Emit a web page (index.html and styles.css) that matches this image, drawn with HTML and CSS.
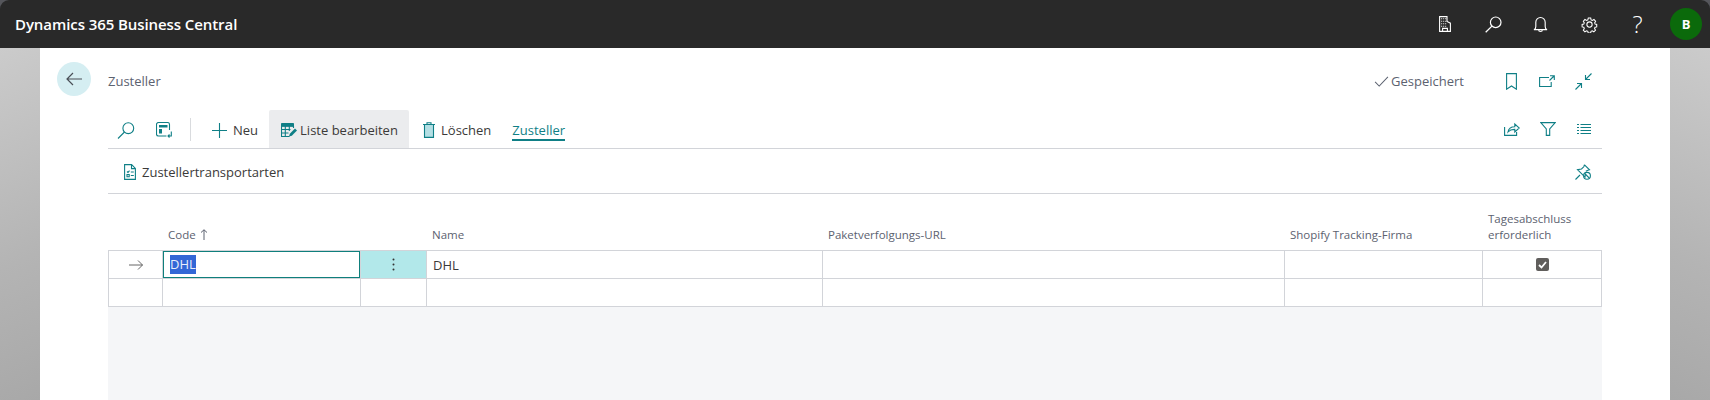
FILE: index.html
```html
<!DOCTYPE html>
<html lang="de">
<head>
<meta charset="utf-8">
<title>Zusteller</title>
<link rel="stylesheet" href="styles.css">
</head>
<body>
<div class="shell">
  <header class="topbar">
    <div class="brand">Dynamics 365 Business Central</div>
    <div class="top-icons">
      <svg class="ti ti-building" viewBox="0 0 12 16"><path d="M.6 15.400V.6h7.400v4.800l3.400 1.800v8.200zM3.600 15.400v-3h4.800v3" fill="none" stroke="#fff" stroke-width="1.100"/><path d="M2.200 2.200h1v1h-1zM4.200 2.200h1v1h-1zM6.200 2.200h1v1h-1zM2.200 4.700h1v1h-1zM4.200 4.700h1v1h-1zM6.200 4.700h1v1h-1zM2.200 7.200h1v1h-1zM4.200 7.200h1v1h-1zM6.200 7.200h1v1h-1zM2.200 9.700h1v1h-1zM4.200 9.700h1v1h-1zM6.200 9.700h1v1h-1z" fill="#fff"/></svg>
      <svg class="ti ti-search" viewBox="0 0 17 17"><circle cx="10.700" cy="6.300" r="5.300" fill="none" stroke="#fff" stroke-width="1.200"/><path d="M6.900 10.100.7 16.300" stroke="#fff" stroke-width="1.300" fill="none"/></svg>
      <svg class="ti ti-bell" viewBox="0 0 16 18"><path d="M1 14.500c1.500-.6 2-1.600 2-3.500V6.500a5 5 0 0 1 10 0V11c0 1.900.5 2.900 2 3.500zM6 14.500a2 2 0 0 0 4 0" fill="none" stroke="#fff" stroke-width="1.200"/></svg>
      <svg class="ti ti-gear" viewBox="0 0 18 18"><path d="M7.500 1h3l.5 2.300 1.500.7 2.100-1.200 2 2.100-1.200 2.100.6 1.500 2 .5v3l-2.100.5-.6 1.500 1.200 2-2.100 2.100-2-1.200-1.500.6-.5 2.200h-3l-.5-2.200-1.500-.6-2.100 1.200-2-2.100 1.200-2-.6-1.500-2.100-.5v-3l2.100-.5.6-1.500-1.200-2.100 2-2.100 2.100 1.200 1.500-.7z" transform="translate(1.350 1.350) scale(.85)" fill="none" stroke="#fff" stroke-width="1.300"/><circle cx="9" cy="9" r="2.800" fill="none" stroke="#fff" stroke-width="1.100"/></svg>
      <span class="ti-help">?</span>
      <span class="avatar">B</span>
    </div>
  </header>
  <div class="stage">
    <div class="gutter gutter-left"></div>
    <main class="page">
      <div class="back-col">
        <span class="back">
          <svg class="back-icon" viewBox="0 0 16 14"><path d="M7 1 1 7l6 6M1 7h15" fill="none" stroke="#4a4f57" stroke-width="1.200"/></svg>
        </span>
      </div>
      <div class="content">
        <div class="title-row">
          <h1 class="title">Zusteller</h1>
          <div class="saved">
            <svg class="check" viewBox="0 0 16 12"><path d="M1 6.500 5.500 11 15 1" fill="none" stroke="#5c6270" stroke-width="1.100"/></svg>
            <span>Gespeichert</span>
          </div>
          <div class="title-icons">
            <svg class="ic ic-bookmark" viewBox="0 0 11 17"><path d="M.6.600h9.800v15.600L5.500 13 .6 16.200z" class="ln"/></svg>
            <svg class="ic ic-open" viewBox="0 0 16 12"><path d="M10 2.500H.6v9h11.600V7M11 .7h4.300V5M15 1l-4.500 4.500" class="ln"/></svg>
            <svg class="ic ic-collapse" viewBox="0 0 17 17"><path d="M16.500.5 10.500 6.500M10.500 2v4.500H15M.5 16.500l6-6M2 10.500h4.500V15" class="ln"/></svg>
          </div>
        </div>
        <div class="toolbar">
          <div class="tb-left">
            <svg class="ic ic-search" viewBox="0 0 18 17"><circle cx="11.300" cy="6.200" r="5.400" class="ln"/><path d="M7.500 10 1 16.500" class="ln"/></svg>
            <svg class="ic ic-layout" viewBox="0 0 16 16"><path d="M10.500 14H2.500a2 2 0 0 1-2-2V2.500a2 2 0 0 1 2-2h9a2 2 0 0 1 2 2V8" class="ln"/><path d="M3 3h8.500v2.500H3zM3 7h3v4.500H3z" fill="#0f7f86"/><path d="M15.300 9.500v4.500H12M13.500 15.500 12 14l1.500-1.500" class="ln"/></svg>
            <span class="tb-sep"></span>
            <button class="tb-btn tb-new"><svg class="ic ic-plus" viewBox="0 0 15 15"><path d="M7.500 0v15M0 7.500h15" class="ln"/></svg>Neu</button>
            <button class="tb-btn tb-hover"><svg class="ic ic-grid" viewBox="0 0 16 14"><path d="M.5.500h12v2.800H.5z" fill="#0f7f86" stroke="#0f7f86"/><path d="M.5 3v10.500h8M.5 6.500h9M.5 10h7M4.300 3v10M8.300 3v5M12.500 3v2" class="ln"/><path d="M8 13.500l.8-2.800 5.200-5.200 2 2-5.200 5.200z" fill="#0f7f86"/></svg>Liste bearbeiten</button>
            <button class="tb-btn tb-del"><svg class="ic ic-trash" viewBox="0 0 12 16"><path d="M1.500 2.500h9V15.400h-9z" fill="#b4dfe4" stroke="#0f7f86" stroke-width="1.100"/><path d="M0 2.500h12M4 2.500V.8h4v1.700" class="ln"/></svg>Löschen</button>
            <a class="tb-tab">Zusteller</a>
          </div>
          <div class="tb-right">
            <svg class="ic ic-share" viewBox="0 0 16 14"><path d="M.6 5v8.400h12V10" class="ln"/><path d="M4 10c.5-3.500 3-5.300 6.800-5.300V2l4.500 4-4.500 4V7.400C8 7.300 5.800 8 4 10z" class="ln"/></svg>
            <svg class="ic ic-filter" viewBox="0 0 16 14"><path d="M.8.600h14.400L9.700 7v6.400H6.300V7z" class="ln"/></svg>
            <svg class="ic ic-list" viewBox="0 0 14 10"><path d="M0 .5h2M3.500.5H14M0 3.500h2M3.500 3.500H14M0 6.500h2M3.500 6.500H14M0 9.500h2M3.500 9.500H14" class="ln"/></svg>
          </div>
        </div>
        <div class="actions">
          <div class="action">
            <svg class="ic ic-doc" viewBox="0 0 12 16"><path d="M.6.600h7l3.800 3.800v11H.6zM7.500.600v4h3.900" class="ln"/><path d="M3 7.500l1 1 1.500-1.800M6.800 8h3M6.800 11.500h3M3 10.500h2.200v2.200H3z" class="ln"/></svg>
            <span>Zustellertransportarten</span>
          </div>
          <svg class="ic ic-pin" viewBox="0 0 16 16"><path d="M.5 15.500 5 11M9.500.8l5 5-1.600.5-2.100 1M9.500.8l-.7 2L6.500 5l-4 .7 7.500 7.500.5-3" class="ln"/><circle cx="12" cy="11.800" r="3.400" class="ln"/><path d="M9.800 9.500l4.500 4.600" class="ln"/></svg>
        </div>
        <div class="grid">
          <div class="h h-first"></div>
          <div class="h"><span>Code</span><svg class="sort" viewBox="0 0 8 11"><path d="M4 11V.8M1 3.500 4 .8l3 2.700" fill="none" stroke="#5c6270"/></svg></div>
          <div class="h"></div>
          <div class="h">Name</div>
          <div class="h">Paketverfolgungs-URL</div>
          <div class="h">Shopify Tracking-Firma</div>
          <div class="h h-wrap">Tagesabschluss erforderlich</div>

          <div class="c c-first c-top c-arrow"><svg class="row-arrow" viewBox="0 0 14 10"><path d="M9 .5 13.500 5 9 9.500M13.500 5H0" fill="none" stroke="#555" stroke-width=".9"/></svg></div>
          <div class="c c-top c-focus"><span class="sel">DHL</span></div>
          <div class="c c-top c-menu"><svg class="dots" viewBox="0 0 3 13"><circle cx="1.500" cy="1.500" r="1"/><circle cx="1.500" cy="6.500" r="1"/><circle cx="1.500" cy="11.500" r="1"/></svg></div>
          <div class="c c-top c-name">DHL</div>
          <div class="c c-top"></div>
          <div class="c c-top"></div>
          <div class="c c-top c-check"><span class="checkbox"><svg viewBox="0 0 13 13"><path d="M3 7l2.500 2.500L10 4" fill="none" stroke="#fff" stroke-width="1.800"/></svg></span></div>

          <div class="c c-first"></div>
          <div class="c"></div>
          <div class="c"></div>
          <div class="c"></div>
          <div class="c"></div>
          <div class="c"></div>
          <div class="c"></div>
        </div>
        <div class="empty"></div>
      </div>
    </main>
    <div class="gutter gutter-right"></div>
  </div>
</div>
</body>
</html>
```
FILE: styles.css
```css
* { box-sizing: border-box; }
html, body { margin: 0; padding: 0; height: 100%; overflow: hidden; }
body {
  background: #55565b;
  font-family: "Open Sans", "Noto Sans", "Liberation Sans", sans-serif;
  font-size: 13px;
  color: #3b3a39;
}
.shell { display: flex; flex-direction: column; height: 400px; }
.topbar {
  flex: 0 0 48px;
  height: 48px;
  display: flex;
  align-items: center;
  justify-content: space-between;
  background: #292929;
  border-radius: 9px 9px 0 0;
  padding: 0 8px 0 15px;
}
.brand { color: #fff; font-size: 15px; font-weight: 600; letter-spacing: -.08px; }
.top-icons { display: flex; align-items: center; }
.ti { display: block; }
.ti-building { width: 12px; height: 16px; margin-right: 34px; }
.ti-search { width: 17px; height: 17px; margin-right: 31px; }
.ti-bell { width: 15px; height: 17px; margin-right: 33px; }
.ti-gear { width: 17px; height: 17px; margin-right: 33px; }
.ti-help { color: #fff; font-size: 24px; font-weight: 300; line-height: 26px; width: 13px; margin-right: 26px; text-align: center; }
.avatar {
  width: 32px; height: 32px; border-radius: 50%;
  background: #0b6a0b; color: #fff;
  font-size: 13px; font-weight: 700;
  display: flex; align-items: center; justify-content: center;
}
.stage { flex: 1; display: flex; min-height: 0; }
.gutter { flex: 0 0 40px; }
.gutter-left { background: linear-gradient(155deg, #cbcbcb 0%, #b4b4b4 60%, #a8a8a8 100%); }
.gutter-right { background: linear-gradient(205deg, #cbcbcb 0%, #b4b4b4 60%, #a8a8a8 100%); }
.page { flex: 1; background: #fff; display: flex; padding-top: 14px; min-width: 0; }
.back-col { flex: 0 0 68px; padding-left: 17px; }
.back {
  width: 34px; height: 34px; border-radius: 50%;
  background: #d5eef2;
  display: flex; align-items: center; justify-content: center;
}
.back-icon { width: 16px; height: 14px; margin-right: 1px; }
.content { width: 1494px; display: flex; flex-direction: column; }

.ln { fill: none; stroke: #0f7f86; stroke-width: 1.100; }
.ic { display: block; flex: none; }

.title-row { display: flex; align-items: center; height: 34px; padding-top: 4px; }
.title { margin: 0; font-size: 13px; font-weight: 400; color: #5c6270; flex: 1; }
.saved { display: flex; align-items: center; gap: 2px; color: #5c6270; font-size: 13px; margin-right: 42px; }
.check { width: 15px; height: 11px; }
.title-icons { display: flex; align-items: center; margin-right: 10px; }
.ic-bookmark { width: 11px; height: 17px; margin-right: 22px; }
.ic-open { width: 16px; height: 12px; margin-right: 20px; }
.ic-collapse { width: 17px; height: 17px; }

.toolbar {
  display: flex; align-items: flex-end; justify-content: space-between;
  height: 38px; margin-top: 14px;
  border-bottom: 1px solid #d2d4d9;
  box-sizing: content-box;
}
.tb-left { display: flex; align-items: center; height: 38px; padding-left: 9px; }
.ic-search { width: 18px; height: 17px; margin: 2px 21px 0 0; }
.ic-layout { width: 16px; height: 16px; margin-top: 1px; }
.tb-sep { width: 1px; height: 23px; background: #d9dbde; margin: 0 21px 0 18px; }
.tb-btn {
  display: flex; align-items: center; height: 38px;
  border: 0; background: none; padding: 2px 0 0;
  font: inherit; font-size: 13px; color: #3b3a39;
}
.tb-new { margin-right: 11px; }
.ic-plus { width: 15px; height: 15px; margin-right: 6px; }
.tb-hover { background: #ebecee; border-radius: 2px 2px 0 0; padding-left: 12px; width: 140px; }
.ic-grid { width: 16px; height: 14px; margin-right: 3px; }
.tb-del { margin-left: 14px; }
.ic-trash { width: 12px; height: 16px; margin-right: 6px; }
.tb-tab {
  display: flex; align-items: center; height: 22px;
  align-self: flex-start;
  margin: 9px 0 0 21px;
  color: #0f7f86; font-size: 13px;
  border-bottom: 2px solid #0f7f86;
  padding-top: 2px;
}
.tb-right { display: flex; align-items: center; height: 38px; margin-right: 11px; }
.ic-share { width: 16px; height: 14px; margin-right: 20px; }
.ic-filter { width: 16px; height: 14px; margin-right: 21px; }
.ic-list { width: 14px; height: 10px; }

.actions {
  display: flex; align-items: center; justify-content: space-between;
  height: 44px; box-sizing: border-box;
  height: 45px;
  border-bottom: 1px solid #d2d4d9;
  padding: 2px 11px 0 16px;
}
.action { display: flex; align-items: center; gap: 6px; font-size: 13px; }
.ic-doc { width: 12px; height: 16px; }
.ic-pin { width: 16px; height: 16px; }

.grid {
  display: grid;
  grid-template-columns: 55px 198px 66px 396px 462px 198px 119px;
  grid-template-rows: 56px 29px 28px;
}
.h {
  display: flex; align-items: flex-end; gap: 4px;
  padding: 0 6px 7px 5px;
  font-size: 11.500px; line-height: 16px; color: #5c6270;
}
.h-wrap { display: block; align-self: end; padding-right: 10px; }
.sort { width: 8px; height: 11px; margin-bottom: 3px; }
.c {
  border-right: 1px solid #d2d4d9;
  border-bottom: 1px solid #d2d4d9;
  display: flex; align-items: center;
  font-size: 13px;
}
.c-first { border-left: 1px solid #d2d4d9; }
.c-top { border-top: 1px solid #d2d4d9; }
.c-arrow { justify-content: center; }
.row-arrow { width: 14px; height: 10px; }
.c-focus { box-shadow: inset 0 0 0 1px #0f7f7c; padding-left: 7px; }
.sel { background: #3367d6; color: #e8eefc; line-height: 19px; }
.c-menu { background: #b2e8ea; justify-content: center; }
.dots { width: 3px; height: 13px; fill: #333; }
.c-name { padding-left: 6px; }
.c-check { justify-content: center; }
.checkbox { width: 13px; height: 13px; background: #605e5c; border-radius: 2px; display: block; margin-bottom: 1px; }
.checkbox svg { display: block; width: 13px; height: 13px; }
.empty { flex: 1; background: #f5f6f8; }
```
